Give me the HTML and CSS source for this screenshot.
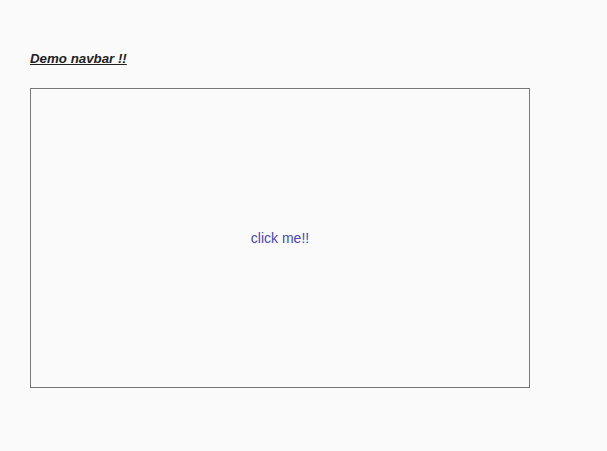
FILE: index.html
```html
<!DOCTYPE html>
<html>
<head>
<meta charset="utf-8">
<link rel="stylesheet" href="styles.css">
</head>
<body>
<div class="page">
  <div class="title">Demo navbar !!</div>
  <div class="box"><a class="link">click me!!</a></div>
</div>
</body>
</html>
```
FILE: styles.css
```css
html, body { margin: 0; padding: 0; background: #fafafa; }
.page { padding: 48px 30px 0 30px; font-family: "Liberation Sans", Arial, sans-serif; }
.title { font-size: 13.3px; font-weight: bold; font-style: italic; text-decoration: underline; color: #222; line-height: 21px; margin-bottom: 19px; }
.box { width: 498px; height: 298px; border: 1px solid #777; display: flex; align-items: center; justify-content: center; }
.link { color: #4848b8; font-size: 14px; }
```
